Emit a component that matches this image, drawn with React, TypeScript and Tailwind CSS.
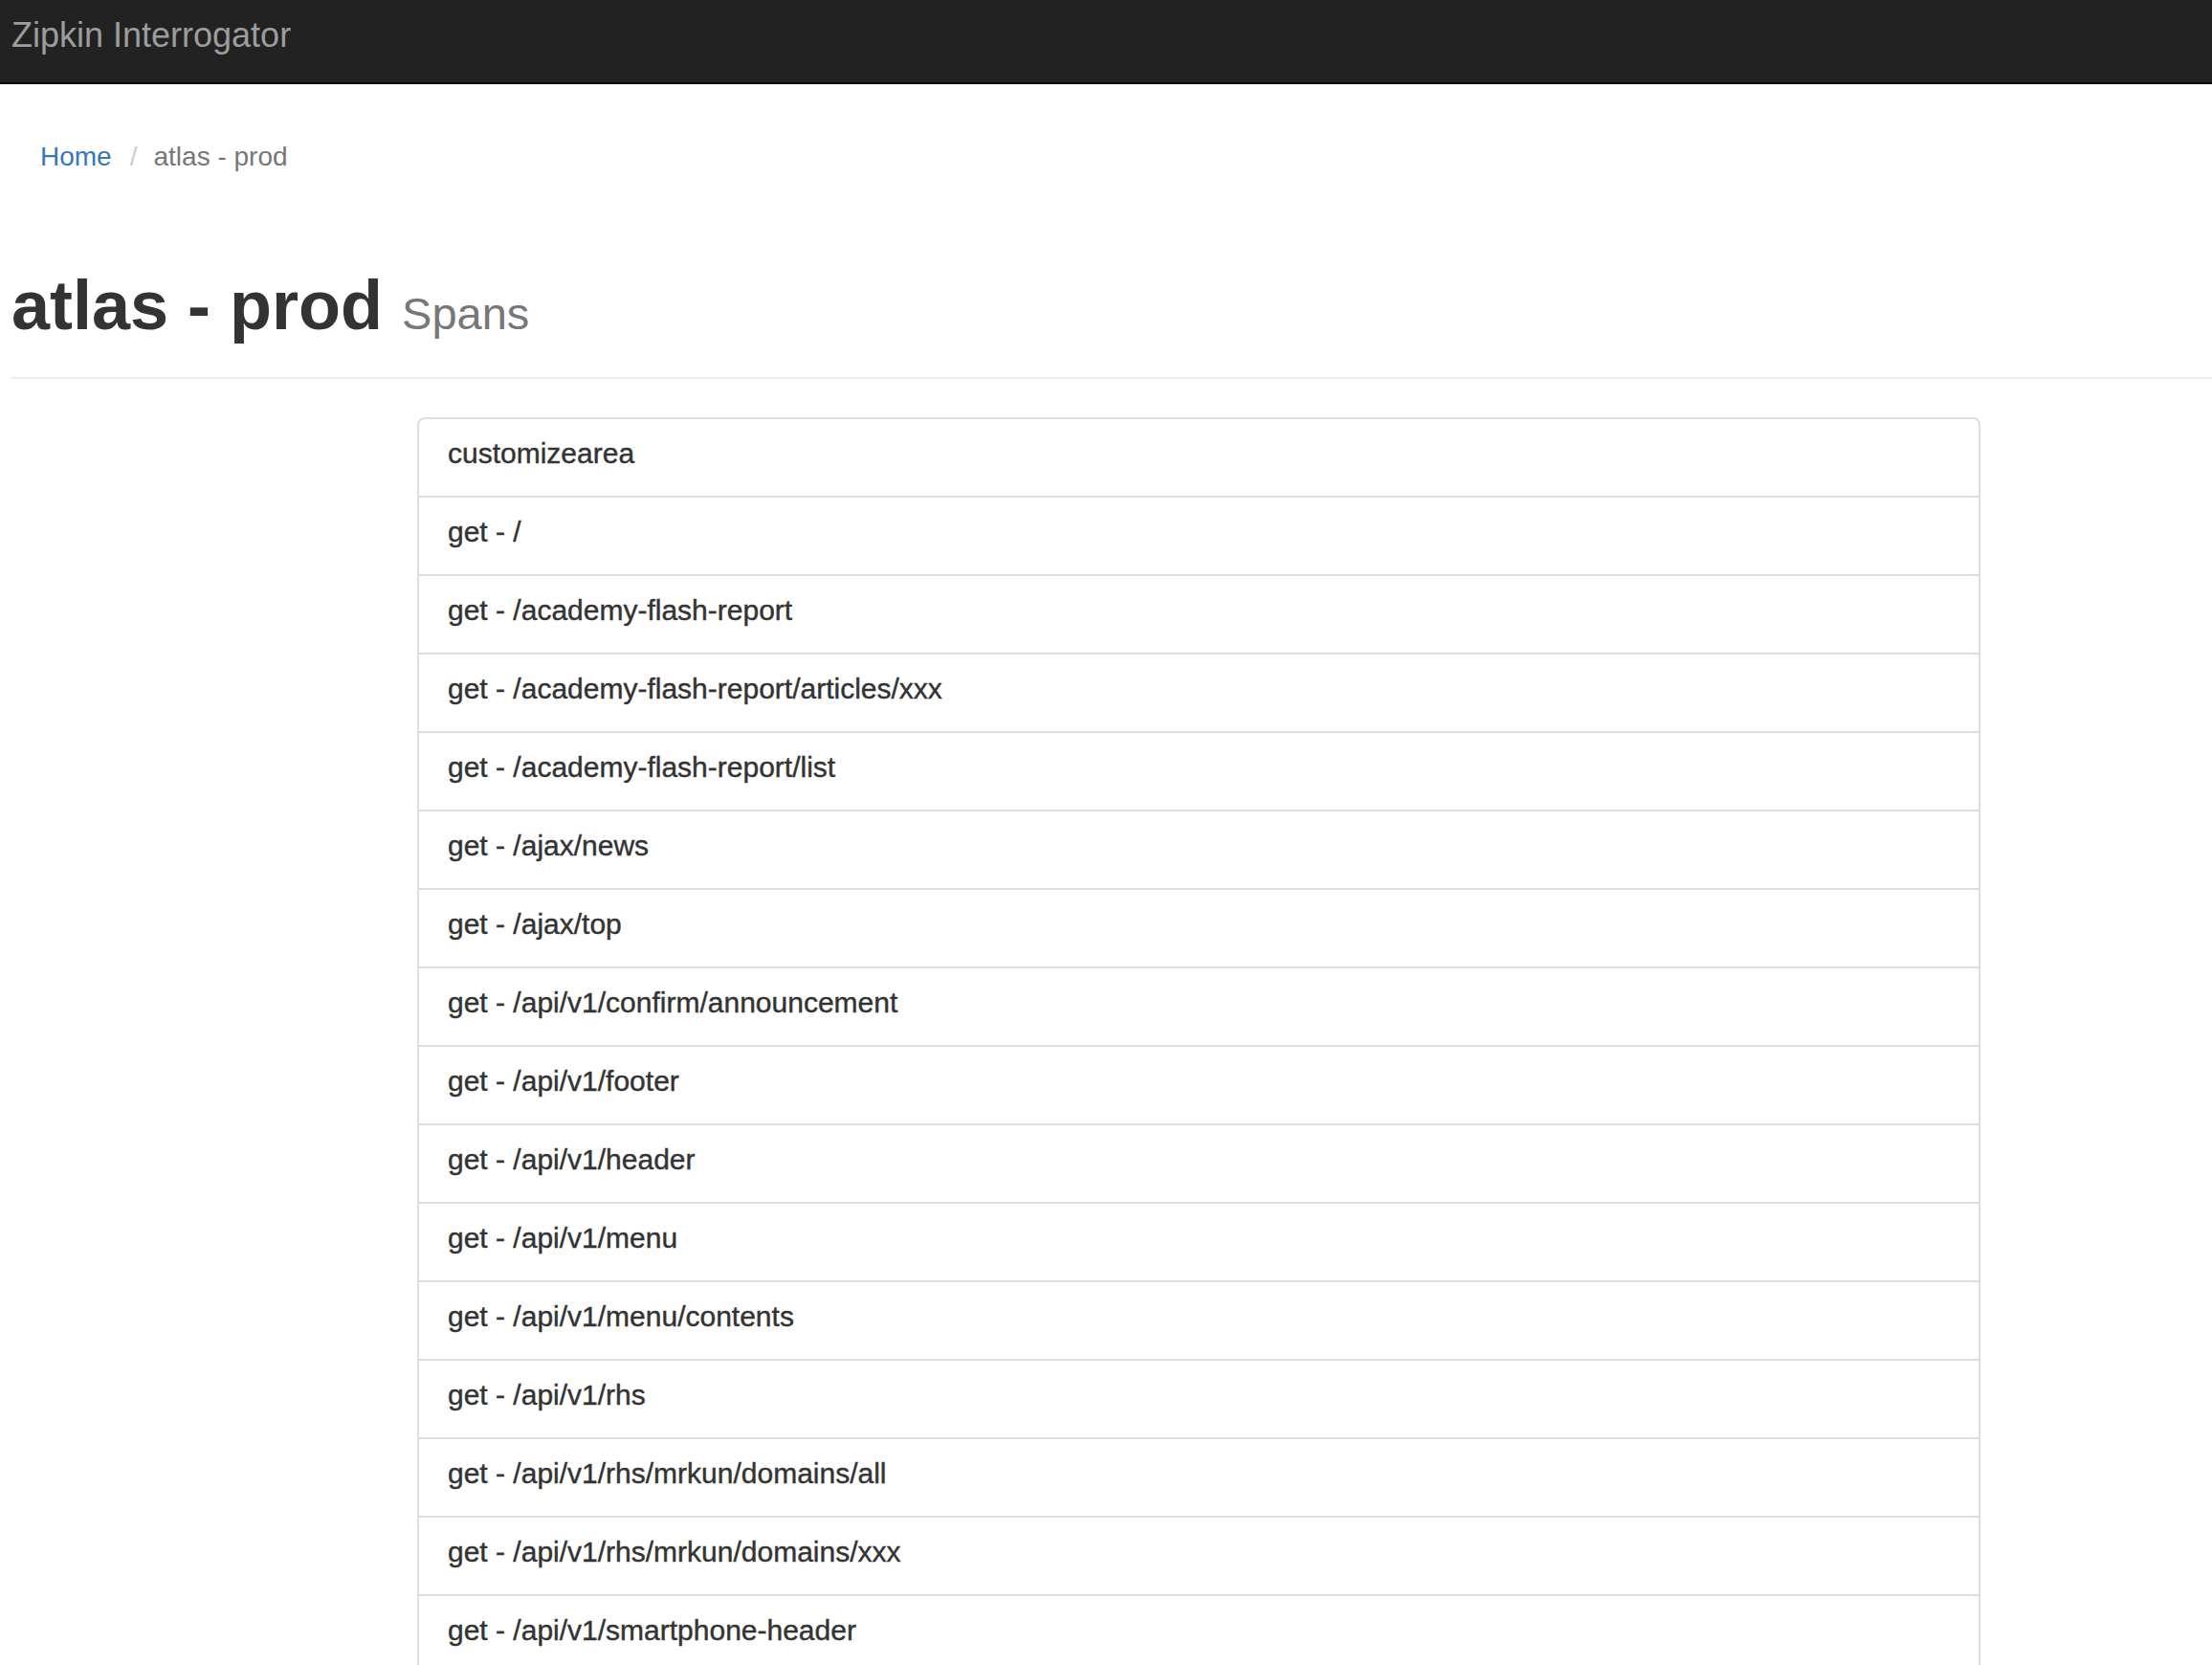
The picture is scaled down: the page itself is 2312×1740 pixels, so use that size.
const spans = [
  'customizearea',
  'get - /',
  'get - /academy-flash-report',
  'get - /academy-flash-report/articles/xxx',
  'get - /academy-flash-report/list',
  'get - /ajax/news',
  'get - /ajax/top',
  'get - /api/v1/confirm/announcement',
  'get - /api/v1/footer',
  'get - /api/v1/header',
  'get - /api/v1/menu',
  'get - /api/v1/menu/contents',
  'get - /api/v1/rhs',
  'get - /api/v1/rhs/mrkun/domains/all',
  'get - /api/v1/rhs/mrkun/domains/xxx',
  'get - /api/v1/smartphone-header',
]

export default function App() {
  return (
    <div className="min-h-screen bg-white font-['Liberation_Sans',Arial,sans-serif] text-[#333]">
      {/* top navbar */}
      <nav className="h-[88px] border-b-2 border-[#080808] bg-[#222] px-[12px] pt-[19px]">
        <a className="block text-[36px] leading-[36px] text-[#9d9d9d]">Zipkin Interrogator</a>
      </nav>

      <div className="pl-[12px] pt-[40px]">
        <ol className="flex items-center px-[30px] py-[16px] text-[28px] leading-[40px]">
          <li>
            <a className="text-[#337ab7]">Home</a>
          </li>
          <li className="flex items-center text-[#777]">
            <span className="pl-[19px] pr-[14px] text-[#ccc]">/</span>
            <span className="pl-[3px]">atlas - prod</span>
          </li>
        </ol>

        <div className="mt-[80px] mb-[40px] border-b-2 border-[#eee] pb-[15px]">
          <h1 className="mb-[20px] h-[79px] text-[72px] font-bold leading-[79px] text-[#333]">
            atlas - prod <small className="text-[47px] leading-none font-normal text-[#777]">Spans</small>
          </h1>
        </div>

        <div className="ml-[424px] w-[1634px]">
          {spans.map((name, i) => (
            <div
              key={name}
              className={
                i === 0
                  ? 'rounded-t-[8px] border-2 border-[#ddd] bg-white px-[30px] pt-[16px] pb-[24px] text-[30px] leading-[40px] [-webkit-text-stroke:0.4px_#333]'
                  : 'mt-[-2px] border-2 border-[#ddd] bg-white px-[30px] pt-[16px] pb-[24px] text-[30px] leading-[40px] [-webkit-text-stroke:0.4px_#333]'
              }
            >
              {name}
            </div>
          ))}
        </div>
      </div>
    </div>
  )
}
